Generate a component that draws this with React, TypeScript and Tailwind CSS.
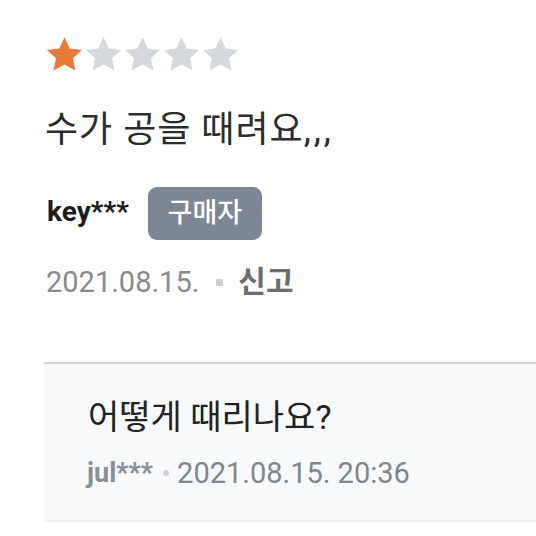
import React from "react";

const Star = ({ color }: { color: string }) => (
  <svg width="39" height="37" viewBox="0 0 24 23" className="block">
    <path
      d="M12 0.8l3.3 7 7.6 0.9-5.6 5.2 1.5 7.6L12 17.7l-6.8 3.8 1.5-7.6L1.1 8.7l7.6-0.9z"
      fill={color}
    />
  </svg>
);

export default function App() {
  const font = "font-['Roboto','Noto_Sans_CJK_KR',sans-serif]";
  return (
    <div className={`w-[536px] h-[536px] bg-white overflow-hidden ${font}`}>
      <div className="pl-[45px] pt-[36px]">
        <div className="flex">
          <Star color="#e87b3a" />
          <Star color="#d5d8dc" />
          <Star color="#d5d8dc" />
          <Star color="#d5d8dc" />
          <Star color="#d5d8dc" />
        </div>
      </div>
      <div className="pl-[45px] mt-[35px] text-[36px] leading-[44px] text-[#2c2c2c] tracking-[1px]">
        수가 공을 때려요<span className="tracking-[3px]">,,,</span>
      </div>
      <div className="pl-[47px] mt-[35px] flex items-center h-[53px]">
        <span className="text-[28px] font-bold text-[#1c1c1c] leading-[36px] -mt-[4px]">key***</span>
        <span className="ml-[19px] w-[114px] h-[53px] rounded-[9px] bg-[#7d8694] text-white text-[27px] font-medium flex items-center justify-center">
          구매자
        </span>
      </div>
      <div className="pl-[46px] mt-[22px] flex items-center text-[29px] leading-[40px] h-[40px]">
        <span className="text-[#8a8a8a]">2021.08.15.</span>
        <span className="ml-[17px] w-[7px] h-[7px] bg-[#cfd1d4]" />
        <span className="ml-[15px] text-[#6d6d6d] font-bold text-[30px]">신고</span>
      </div>
      <div className="ml-[44px] mt-[60px] border-t-2 border-[#d3d6d9] bg-[#f7f9fb] h-[160px] border-b-2 border-b-[#eef0f2]">
        <div className="pl-[44px] pt-[31px] text-[34px] leading-[44px] text-[#222]">어떻게 때리나요?</div>
        <div className="pl-[43px] mt-[16px] flex items-center text-[29px] leading-[36px]">
          <span className="font-bold text-[#8a8f96] text-[27px]">jul***</span>
          <span className="ml-[10px] w-[6px] h-[6px] rounded-full bg-[#cfd1d4]" />
          <span className="ml-[8px] text-[#80868d]">2021.08.15. 20:36</span>
        </div>
      </div>
    </div>
  );
}
